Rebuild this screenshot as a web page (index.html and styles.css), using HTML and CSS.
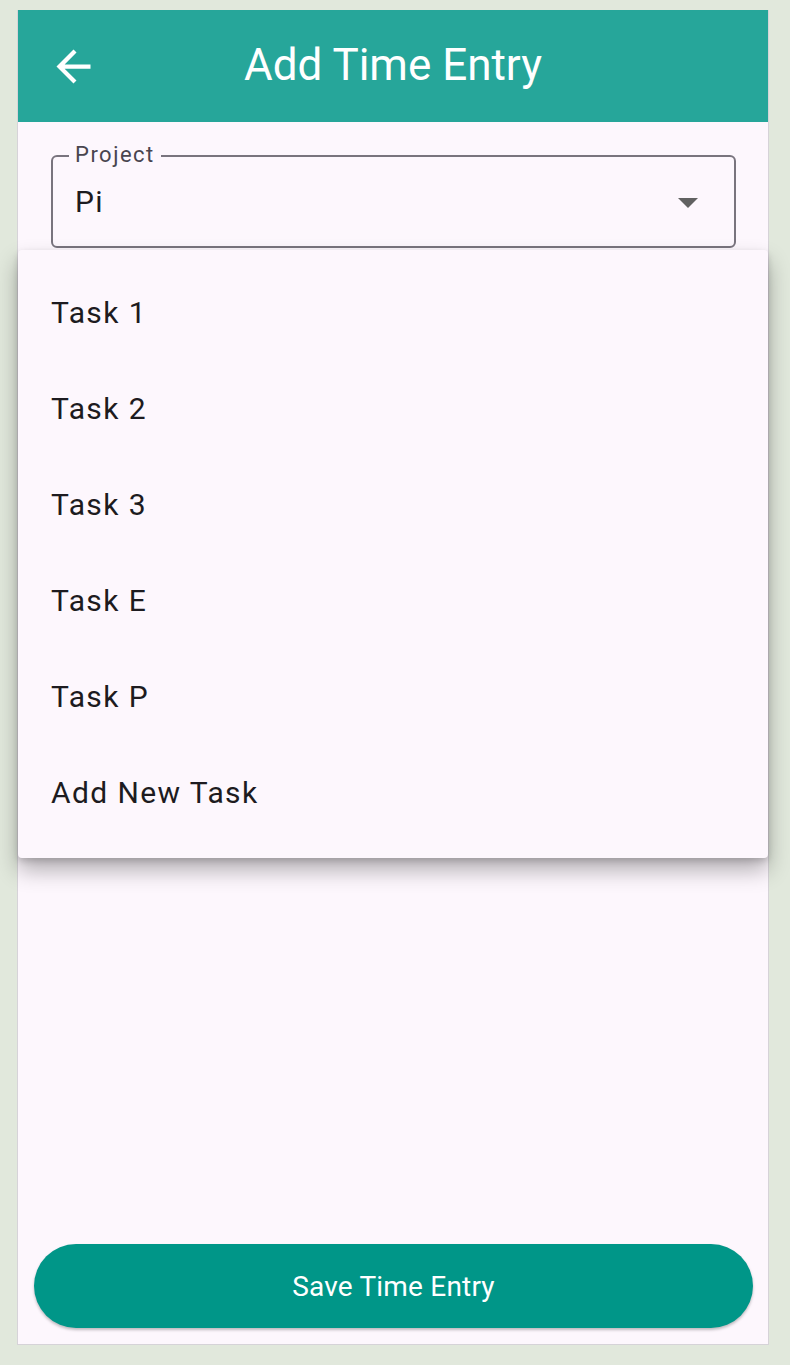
FILE: index.html
```html
<!DOCTYPE html>
<html>
<head>
<meta charset="utf-8">
<link rel="stylesheet" href="styles.css">
</head>
<body>
<div class="frame">
  <header class="appbar">
    <svg class="back" viewBox="0 0 24 24" width="51" height="51"><path d="M20 11H7.83l5.59-5.59L12 4l-8 8 8 8 1.41-1.41L7.83 13H20v-2z" fill="#fff"/></svg>
    <h1 class="title">Add Time Entry</h1>
  </header>
  <main class="content">
    <div class="field">
      <span class="field-label">Project</span>
      <span class="field-value">Pi</span>
      <span class="caret"></span>
    </div>
    <div class="spacer"></div>
    <button class="save">Save Time Entry</button>
    <ul class="menu">
      <li>Task 1</li>
      <li>Task 2</li>
      <li>Task 3</li>
      <li>Task E</li>
      <li>Task P</li>
      <li>Add New Task</li>
    </ul>
  </main>
</div>
</body>
</html>
```
FILE: styles.css
```css
html, body {
  margin: 0;
  padding: 0;
}
body {
  background: #e1e8dc;
  font-family: Roboto, "Noto Sans", sans-serif;
  padding: 10px 0 0 17px;
  height: 1355px;
}
.frame {
  width: 750px;
  height: 1334px;
  border: 1px solid #d6d3d8;
  border-top: none;
  background: #fdf7fd;
  display: flex;
  flex-direction: column;
}
.appbar {
  height: 112px;
  flex: none;
  background: #26a69a;
  display: flex;
  align-items: center;
  position: relative;
}
.back {
  margin-left: 30px;
  flex: none;
}
.title {
  margin: 0;
  color: #fff;
  font-weight: 400;
  font-size: 44px;
  position: absolute;
  left: 0;
  right: 0;
  top: 50%;
  transform: translateY(-52%);
  text-align: center;
  pointer-events: none;
}
.content {
  flex: 1;
  position: relative;
  display: flex;
  flex-direction: column;
  padding: 33px 15px 16px 16px;
}
.field {
  margin: 0 17px 0 17px;
  height: 93px;
  box-sizing: border-box;
  border: 2px solid #79747e;
  border-radius: 6px;
  display: flex;
  align-items: center;
  position: relative;
  padding: 0 36px 0 22px;
}
.field-label {
  position: absolute;
  top: -15px;
  left: 16px;
  padding: 0 6px;
  background: #fdf7fd;
  font-size: 22px;
  letter-spacing: 1.5px;
  color: #49454f;
  line-height: 26px;
}
.field-value {
  flex: 1;
  font-size: 30px;
  letter-spacing: 1.4px;
  color: #1d1b20;
  margin-top: 0;
}
.caret {
  width: 0;
  height: 0;
  border-left: 10px solid transparent;
  border-right: 10px solid transparent;
  border-top: 10px solid #616161;
  margin-top: 2px;
}
.spacer {
  flex: 1;
}
.save {
  height: 84px;
  border: none;
  border-radius: 42px;
  background: #009688;
  color: #fff;
  font-family: Roboto, sans-serif;
  font-size: 28px;
  letter-spacing: 0.2px;
  box-shadow: 0 2px 3px rgba(0,0,0,0.25);
}
.menu {
  position: absolute;
  top: 128px;
  left: 0;
  right: 0;
  margin: 0;
  padding: 14px 0 18px;
  list-style: none;
  background: #fdf7fd;
  border-radius: 4px;
  box-shadow: 0 12px 22px rgba(0,0,0,0.3), 0 3px 6px rgba(0,0,0,0.15);
}
.menu li {
  height: 96px;
  display: flex;
  align-items: center;
  padding-left: 33px;
  font-size: 30px;
  letter-spacing: 1.4px;
  color: #1d1b20;
}
```
